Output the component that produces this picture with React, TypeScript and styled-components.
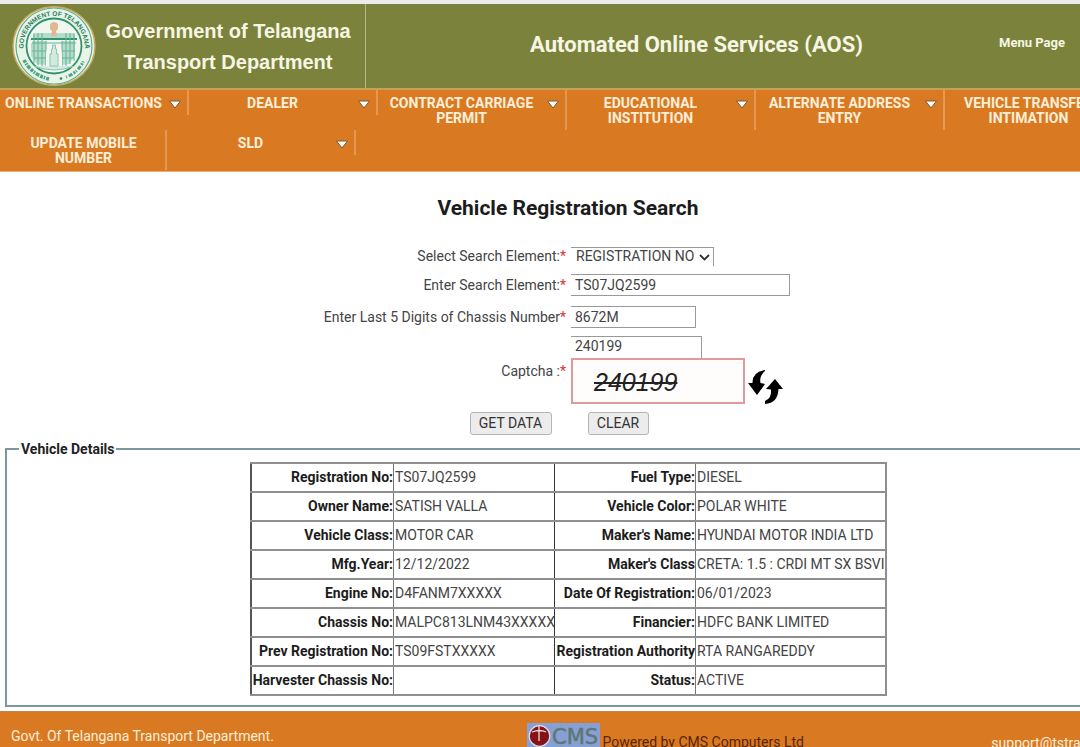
import React from "react";
import styled, { createGlobalStyle } from "styled-components";

const GlobalStyle = createGlobalStyle`
  * { box-sizing: border-box; }
  body {
    margin: 0;
    background: #fff;
    color: #333;
    font-family: Roboto, "Liberation Sans", sans-serif;
    font-size: 14px;
    line-height: 16px;
  }
`;

const Viewport = styled.div`
  height: 100vh;
  overflow: hidden;
`;

const Page = styled.div`
  min-width: 1136px;
  border-top: 4px solid #ecedea;
`;

const Header = styled.header`
  display: flex;
  height: 86px;
  background: #7b823b;
  border-bottom: 2px solid #c9a055;
  color: #f6f6e4;
`;

const Brand = styled.div`
  display: flex;
  align-items: center;
  flex: 0 0 366px;
  padding-left: 12px;
  gap: 4px;
  border-right: 1px solid #b5b98a;
`;

const BrandName = styled.div`
  flex: 0 0 256px;
  padding-top: 2px;
  font: bold 20px/31px "Liberation Sans", Arial, sans-serif;
  text-align: center;
  white-space: nowrap;
`;

const AppTitle = styled.h1`
  flex: 1;
  margin: 0;
  padding: 0 0 2px 28px;
  align-self: center;
  font-size: 22px;
  line-height: 28px;
  text-align: center;
`;

const MenuLink = styled.a`
  align-self: center;
  margin-right: 71px;
  padding-bottom: 6px;
  color: inherit;
  font-size: 13px;
  font-weight: bold;
  text-decoration: none;
`;

const Nav = styled.nav`
  padding-bottom: 1px;
  background: #d97a22;
  border-bottom: 1px solid #e9b27c;
`;

const NavList = styled.ul`
  display: flex;
  flex-wrap: wrap;
  align-items: flex-start;
  margin: 0;
  padding: 0;
  list-style: none;
`;

const NavItem = styled.li`
  display: flex;
  padding: 6px 0 4px;
  border-right: 2px solid #e69750;
`;

const NavLink = styled.a`
  width: 165px;
  padding: 0 0 0 2px;
  color: #fdeed8;
  font-weight: bold;
  line-height: 15px;
  text-align: center;
  text-decoration: none;
`;

const Arrow = styled.svg`
  margin: 4px 6px 0 4px;
  flex: none;
`;

const Heading = styled.h2`
  margin: 22px 0 25px;
  color: #1c1c1c;
  font-size: 21px;
  line-height: 28px;
  text-align: center;
`;

const Form = styled.form`
  display: grid;
  grid-template-columns: 1fr 1fr;
  column-gap: 4px;
`;

const FieldLabel = styled.label<{ $top: number }>`
  justify-self: end;
  padding-top: ${(p) => p.$top}px;
  color: #444;
`;

const Required = styled.span`
  color: #e03030;
`;

const Field = styled.div<{ $gap: number }>`
  display: flex;
  flex-wrap: wrap;
  margin-bottom: ${(p) => p.$gap}px;
  padding-left: 1px;
`;

const TextInput = styled.input<{ $width: number; $open?: boolean }>`
  width: ${(p) => p.$width}px;
  height: 22px;
  padding: 0 4px 1px;
  border: 1px solid #999;
  border-left: 0;
  ${(p) => p.$open && "border-bottom: 0; padding-bottom: 3px;"}
  background: #fff;
  color: #444;
  font: inherit;
`;

const SelectBox = styled.div`
  display: grid;
  align-items: start;
  width: 143px;
  height: 19px;
  border: 1px solid #999;
  border-width: 1px 1px 0 0;

  > * { grid-area: 1 / 1; }
  > svg { justify-self: end; margin: 6px 3px 0 0; pointer-events: none; }
`;

const Select = styled.select`
  appearance: none;
  width: 100%;
  padding: 0 5px;
  border: 0;
  background: transparent;
  color: #444;
  font: inherit;
`;

const Captcha = styled.div`
  width: 174px;
  height: 46px;
  padding-left: 21px;
  border: 2px solid #e09a9a;
  background: #fffdfc;
  color: #222;
  font: italic 25px/44px "Liberation Sans", Arial, sans-serif;
  text-decoration: line-through;
`;

const CaptchaRow = styled.div`
  display: flex;
  flex-basis: 100%;
  align-items: flex-end;
  gap: 3px;
`;

const IconButton = styled.button`
  display: flex;
  padding: 0;
  border: 0;
  background: none;
`;

const Actions = styled.div`
  display: flex;
  justify-content: center;
  gap: 36px;
  padding-right: 18px;
`;

const Button = styled.button<{ $width: number }>`
  width: ${(p) => p.$width}px;
  height: 23px;
  padding: 0 0 2px;
  border: 1px solid #b5b5b5;
  border-radius: 3px;
  background: #ececec;
  color: #333;
  font: inherit;
`;

const Details = styled.fieldset`
  margin: 5px 5px 4px;
  padding: 4px 0 9px;
  border: 2px solid #7c96a4;
`;

const Legend = styled.legend`
  margin-left: 12px;
  padding: 0 2px;
  color: #222;
  font-weight: bold;
  line-height: 18px;
`;

const Table = styled.table`
  width: 635px;
  margin: 0 auto;
  border-collapse: collapse;
  table-layout: fixed;
  border: 2px solid #8f8f8f;
`;

const HeadCell = styled.th`
  height: 29px;
  padding: 0 0 2px;
  border: 2px solid #8f8f8f;
  border-left: 1px solid #333;
  border-right: 1px solid #777;
  color: #1c1c1c;
  text-align: right;
  white-space: nowrap;

  &:first-child { border-left: 2px solid #555; }
`;

const Cell = styled.td`
  padding: 0 0 2px 1px;
  border: 2px solid #8f8f8f;
  border-left: 1px solid #777;
  border-right: 1px solid #333;
  color: #444;
  white-space: nowrap;

  &:last-child { border-right: 2px solid #8f8f8f; }
`;

const Footer = styled.footer`
  display: grid;
  grid-template-columns: 46% 1fr auto;
  align-items: start;
  height: 48px;
  padding: 11px 0 0 11px;
  background: #d97a22;
  border-top: 1px solid #c3844a;
  color: #fdeed8;
`;

const FooterText = styled.span`
  padding-top: 5px;
`;

const Powered = styled.span`
  display: flex;
  align-items: flex-start;
  gap: 3px;
  margin-left: -2px;
  color: #5a2408;

  > span { padding-top: 11px; }
`;

const Support = styled.a`
  padding-top: 12px;
  color: inherit;
  text-decoration: none;
`;

const MENU = [
  { label: "ONLINE TRANSACTIONS", arrow: true },
  { label: "DEALER", arrow: true },
  { label: "CONTRACT CARRIAGE PERMIT", arrow: true },
  { label: "EDUCATIONAL INSTITUTION", arrow: true },
  { label: "ALTERNATE ADDRESS ENTRY", arrow: true },
  { label: "VEHICLE TRANSFER INTIMATION", arrow: true },
  { label: "UPDATE MOBILE NUMBER", arrow: false },
  { label: "SLD", arrow: true },
];

const ROWS = [
  ["Registration No:", "TS07JQ2599", "Fuel Type:", "DIESEL"],
  ["Owner Name:", "SATISH VALLA", "Vehicle Color:", "POLAR WHITE"],
  ["Vehicle Class:", "MOTOR CAR", "Maker's Name:", "HYUNDAI MOTOR INDIA LTD"],
  ["Mfg.Year:", "12/12/2022", "Maker's Class", "CRETA: 1.5 : CRDI MT SX BSVI"],
  ["Engine No:", "D4FANM7XXXXX", "Date Of Registration:", "06/01/2023"],
  ["Chassis No:", "MALPC813LNM43XXXXX", "Financier:", "HDFC BANK LIMITED"],
  ["Prev Registration No:", "TS09FSTXXXXX", "Registration Authority", "RTA RANGAREDDY"],
  ["Harvester Chassis No:", "", "Status:", "ACTIVE"],
];

function Seal() {
  return (
    <svg width="84" height="80" viewBox="0 0 84 80" preserveAspectRatio="none" aria-hidden="true">
      <defs>
        <path id="seal-top" d="M12.500 48A30.500 30.500 0 1 1 71.500 48" />
      </defs>
      <ellipse cx="42" cy="40" rx="41" ry="39.300" fill="#e9f3e6" stroke="#c9a860" strokeWidth="1.500" />
      <circle cx="42" cy="40" r="38" fill="none" stroke="#5fae93" strokeWidth="1.200" />
      <circle cx="42" cy="40" r="27.500" fill="#f1f7ef" stroke="#2f9470" strokeWidth="1.800" />
      <text fill="#25805f" fontFamily="Liberation Sans, sans-serif" fontWeight="bold" fontSize="6.500">
        <textPath href="#seal-top" startOffset="50%" textAnchor="middle">GOVERNMENT OF TELANGANA</textPath>
      </text>
      <path d="M12 54Q20 69 37 73" fill="none" stroke="#4da587" strokeWidth="3.500" strokeDasharray="3 1 1.500 1 4 1" />
      <path d="M54 71Q66 67 72 54" fill="none" stroke="#4da587" strokeWidth="3" strokeDasharray="1 2 4 1.500 2 1" />
      <circle cx="49" cy="72.500" r="1.300" fill="#25805f" />
      <path d="M21 27h42v7H21zM21 35h13v24l-9-1-6-8V38zM50 35h13v15l-6 8-7 1z" fill="#b5dccb" />
      <path d="M19 33h46" stroke="#2f9470" strokeWidth="1.800" />
      <path d="M20 37h44M22 28v29M26 27v32M30 27v33M34 35v25M50 35v25M54 27v33M58 27v31M62 28v27M20 45h14M50 45h13M22 52h12M50 52h12" stroke="#62b296" strokeWidth="1" fill="none" />
      <path d="M34 60V48q0-8 8-10q8 2 8 10v12z" fill="#f2f8f1" />
      <path d="M38 60V48h1.500v-5h1v-4h3v4h1v5H46v12zM22 60q20 8 40 0" fill="#d3eae1" stroke="#8cc5b1" strokeWidth="1" />
      <path d="M38 18q4-4 8 0v5l-2 2 1 5h-6l1-5-2-2z" fill="#dfb793" />
    </svg>
  );
}

function CmsLogo() {
  return (
    <svg width="73" height="27" viewBox="0 0 73 27" role="img" aria-label="CMS">
      <rect width="73" height="27" fill="#86a0d6" />
      <circle cx="12.500" cy="13" r="10.300" fill="#851313" stroke="#d9dcef" strokeWidth="1.200" />
      <path d="M5 9q8-3 14 0M12 3v15" stroke="#efd6da" strokeWidth="1.300" fill="none" />
      <text x="25" y="21" fontFamily="DejaVu Sans, sans-serif" fontSize="21" fill="#5f7672" stroke="#5f7672" strokeWidth="0.500">CMS</text>
    </svg>
  );
}

function RefreshIcon() {
  return (
    <svg width="35" height="34" viewBox="0 0 35 34" aria-hidden="true">
      <path d="M17 0Q4 2 4.500 13H0L9 25L17 14L12.500 13Q11 6 17 1Z" fill="#000" />
      <path d="M17 34Q30 33 30.500 19H35L27 9L18 19L23 19.500Q24 28 17 31Z" fill="#000" />
    </svg>
  );
}

export default function App() {
  return (
    <Viewport>
      <GlobalStyle />
      <Page>
        <Header>
          <Brand>
            <Seal />
            <BrandName>Government of Telangana<br />Transport Department</BrandName>
          </Brand>
          <AppTitle>Automated Online Services (AOS)</AppTitle>
          <MenuLink href="#menu">Menu Page</MenuLink>
        </Header>
        <Nav>
          <NavList>
            {MENU.map((m) => (
              <NavItem key={m.label}>
                <NavLink href="#">{m.label}</NavLink>
                {m.arrow && (
                  <Arrow width="12" height="9" viewBox="0 0 12 9" aria-hidden="true">
                    <path d="M0.500 1H11.500L6 8Z" fill="#fffdf6" stroke="#7a5a38" strokeWidth="1" />
                  </Arrow>
                )}
              </NavItem>
            ))}
          </NavList>
        </Nav>
        <main>
          <Heading>Vehicle Registration Search</Heading>
          <Form>
            <FieldLabel htmlFor="element" $top={1}>Select Search Element:<Required>*</Required></FieldLabel>
            <Field $gap={8}>
              <SelectBox>
                <Select id="element"><option>REGISTRATION NO</option></Select>
                <svg width="11" height="7" viewBox="0 0 11 7" aria-hidden="true">
                  <path d="M1 1L5.500 5.500L10 1" fill="none" stroke="#333" strokeWidth="1.800" />
                </svg>
              </SelectBox>
            </Field>
            <FieldLabel htmlFor="value" $top={3}>Enter Search Element:<Required>*</Required></FieldLabel>
            <Field $gap={10}><TextInput id="value" $width={219} defaultValue="TS07JQ2599" /></Field>
            <FieldLabel htmlFor="chassis" $top={3}>Enter Last 5 Digits of Chassis Number<Required>*</Required></FieldLabel>
            <Field $gap={8}><TextInput id="chassis" $width={125} defaultValue="8672M" /></Field>
            <FieldLabel htmlFor="captcha" $top={27}>Captcha :<Required>*</Required></FieldLabel>
            <Field $gap={8}>
              <TextInput id="captcha" $width={131} $open defaultValue="240199" />
              <CaptchaRow>
                <Captcha>240199</Captcha>
                <IconButton type="button" aria-label="Refresh captcha"><RefreshIcon /></IconButton>
              </CaptchaRow>
            </Field>
          </Form>
          <Actions>
            <Button type="button" $width={82}>GET DATA</Button>
            <Button type="button" $width={61}>CLEAR</Button>
          </Actions>
          <Details>
            <Legend>Vehicle Details</Legend>
            <Table>
              <colgroup>
                <col width="143" />
                <col width="161" />
                <col width="141" />
                <col width="190" />
              </colgroup>
              <tbody>
                {ROWS.map(([a, b, c, d]) => (
                  <tr key={a}>
                    <HeadCell scope="row">{a}</HeadCell>
                    <Cell>{b}</Cell>
                    <HeadCell scope="row">{c}</HeadCell>
                    <Cell>{d}</Cell>
                  </tr>
                ))}
              </tbody>
            </Table>
          </Details>
        </main>
        <Footer>
          <FooterText>Govt. Of Telangana Transport Department.</FooterText>
          <Powered><CmsLogo /><span>Powered by CMS Computers Ltd</span></Powered>
          <Support href="mailto:support@tstransport.in">support@tstransport.in</Support>
        </Footer>
      </Page>
    </Viewport>
  );
}
